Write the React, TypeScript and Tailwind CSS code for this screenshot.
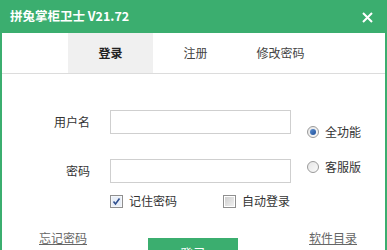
const font = { fontFamily: '"Microsoft YaHei", "Noto Sans CJK SC", sans-serif' };

const Radio = ({ checked }: { checked?: boolean }) => (
  <span className="flex h-[12px] w-[12px] items-center justify-center rounded-full border border-[#9a9a9a] bg-gradient-to-br from-[#e6e6e6] to-[#fafafa]">
    {checked && (
      <span className="h-[6px] w-[6px] rounded-full bg-gradient-to-br from-[#5b8fd0] to-[#1f4f9a]" />
    )}
  </span>
);

const Checkbox = ({ checked }: { checked?: boolean }) => (
  <span className="flex h-[13px] w-[13px] items-center justify-center border border-[#8f8f8f] bg-white">
    {checked ? (
      <svg width="11" height="11" viewBox="0 0 11 11">
        <rect x="0.5" y="0.5" width="10" height="10" fill="#e8eef7" />
        <path d="M2.5 5.5 L4.5 8 L8.5 2.5" stroke="#2f4f8f" strokeWidth="1.6" fill="none" />
      </svg>
    ) : (
      <span className="h-[9px] w-[9px] bg-gradient-to-br from-[#cfcfcf] to-[#f0f0f0]" />
    )}
  </span>
);

export default function App() {
  return (
    <div
      style={font}
      className="h-[250px] w-[387px] overflow-hidden border-x-2 border-[#3bae6f] bg-white text-[12px] text-[#333]"
    >
      {/* Title bar */}
      <div className="flex h-[33px] items-center justify-between bg-[#3bae6f] pl-[8px] pr-[12px]">
        <span className="text-[12.5px] font-bold text-white">拼兔掌柜卫士 V21.72</span>
        <svg width="11" height="11" viewBox="0 0 11 11" className="mt-[2px]">
          <path d="M1 1 L10 10 M10 1 L1 10" stroke="white" strokeWidth="2" />
        </svg>
      </div>

      {/* Tabs */}
      <div className="flex h-[41px] border-b border-[#dcdcdc] pl-[66px]">
        <div className="flex w-[85px] items-center justify-center bg-[#f0f0f0] text-[12px] font-bold text-[#222]">
          登录
        </div>
        <div className="flex w-[85px] items-center justify-center text-[12px] text-[#444]">注册</div>
        <div className="flex w-[85px] items-center justify-center text-[12px] text-[#444]">修改密码</div>
      </div>

      {/* Form */}
      <div className="mt-[36px] flex">
        <div className="flex flex-col gap-[25px]">
          <div className="flex items-center">
            <span className="w-[88px] text-right">用户名</span>
            <input className="ml-[20px] h-[24px] w-[181px] border border-[#cfcfcf] outline-none" />
          </div>
          <div className="flex items-center">
            <span className="w-[88px] text-right">密码</span>
            <input
              type="password"
              className="ml-[20px] h-[24px] w-[181px] border border-[#cfcfcf] outline-none"
            />
          </div>
        </div>
        <div className="ml-[16px] mt-[13px] flex flex-col gap-[17px]">
          <label className="flex h-[18px] items-center gap-[6px]">
            <Radio checked />
            <span>全功能</span>
          </label>
          <label className="flex h-[18px] items-center gap-[6px]">
            <Radio />
            <span>客服版</span>
          </label>
        </div>
      </div>

      {/* Options */}
      <div className="mt-[9px] flex h-[18px] items-center pl-[108px]">
        <label className="flex items-center gap-[6px]">
          <Checkbox checked />
          <span>记住密码</span>
        </label>
        <label className="ml-[46px] flex items-center gap-[6px]">
          <Checkbox />
          <span>自动登录</span>
        </label>
      </div>

      {/* Bottom */}
      <div className="mt-[19px] flex items-start pl-[37px]">
        <a className="h-[18px] leading-[18px] text-[#666] underline">忘记密码</a>
        <button className="ml-[61px] mt-[9px] h-[30px] w-[90px] bg-[#3bae6f] text-[13px] text-white">
          登录
        </button>
        <a className="ml-[71px] h-[18px] leading-[18px] text-[#666] underline">软件目录</a>
      </div>
    </div>
  );
}
